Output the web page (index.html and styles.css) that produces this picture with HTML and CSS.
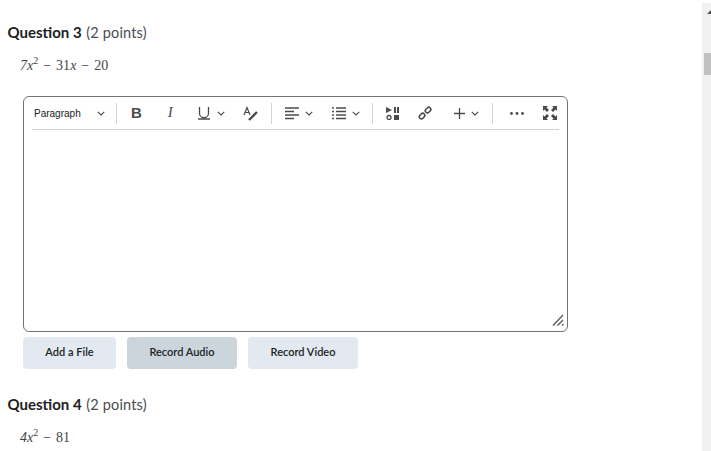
FILE: index.html
```html
<!DOCTYPE html>
<html lang="en">
<head>
<meta charset="utf-8">
<title>Quiz</title>
<link rel="stylesheet" href="styles.css">
</head>
<body>
<div class="page">
  <main class="content">
    <section class="question">
      <h2 class="q-title">Question 3 <span class="q-points">(2 points)</span></h2>
      <p class="math"><i>7x</i><sup>2</sup> − 31<i>x</i> − 20</p>
      <div class="editor">
        <div class="toolbar">
          <div class="para">Paragraph
            <svg class="chev" viewBox="0 0 8 5"><path d="M.7.8 4 4 7.3.8"/></svg>
          </div>
          <span class="sep"></span>
          <span class="tool t-b">B</span>
          <span class="tool t-i">I</span>
          <span class="tool t-u"><svg width="14" height="14" viewBox="0 0 14 14"><path class="st" d="M2.500 1v6.200a4.500 4.500 0 0 0 9 0V1M1 13h12"/></svg><svg class="chev" viewBox="0 0 8 5"><path d="M.7.8 4 4 7.3.8"/></svg></span>
          <span class="tool t-a"><svg width="16" height="15" viewBox="0 0 16 15"><path class="st thin" d="M1 9 4 1.500 7 9M2 6.500h4"/><path class="st thick" d="M6 14 14 6"/></svg></span>
          <span class="sep s2"></span>
          <span class="tool t-al"><svg width="14" height="13" viewBox="0 0 14 13"><path class="st" d="M0 1h14M0 4.500h9M0 8h14M0 11.500h9"/></svg><svg class="chev" viewBox="0 0 8 5"><path d="M.7.8 4 4 7.3.8"/></svg></span>
          <span class="tool t-li"><svg width="14" height="13" viewBox="0 0 14 13"><path class="st" d="M0 1h2M4 1h10M0 4.500h2M4 4.500h10M0 8h2M4 8h10M0 11.500h2M4 11.500h10"/></svg><svg class="chev" viewBox="0 0 8 5"><path d="M.7.8 4 4 7.3.8"/></svg></span>
          <span class="sep s3"></span>
          <span class="tool t-med"><svg width="13" height="13" viewBox="0 0 13 13"><path class="fl" d="M0 0 6 3 0 6zM8 0h2v6H8zM11 0h2v6h-2zM8 8h5v5H8z"/><circle class="st" cx="3" cy="10.500" r="2"/></svg></span>
          <span class="tool t-ln"><svg width="14" height="14" viewBox="0 0 14 14"><g class="st link"><rect x="1" y="8" width="6" height="4.200" rx="2.100" transform="rotate(-45 4 10)"/><rect x="7" y="2" width="6" height="4.200" rx="2.100" transform="rotate(-45 10 4)"/></g></svg></span>
          <span class="tool t-pl"><svg width="11" height="11" viewBox="0 0 11 11"><path class="st" d="M5.500 0v11M0 5.500h11"/></svg><svg class="chev" viewBox="0 0 8 5"><path d="M.7.8 4 4 7.3.8"/></svg></span>
          <span class="sep s4"></span>
          <span class="tool t-mo"><svg width="14" height="3" viewBox="0 0 14 3"><circle class="fl" cx="1.500" cy="1.500" r="1.400"/><circle class="fl" cx="7" cy="1.500" r="1.400"/><circle class="fl" cx="12.500" cy="1.500" r="1.400"/></svg></span>
          <span class="tool t-fs"><svg width="14" height="14" viewBox="0 0 14 14"><path class="fl" d="M0 0h5L3.500 1.500 6 4 4 6 1.500 3.500 0 5zM14 0v5L12.500 3.500 10 6 8 4 10.500 1.500 9 0zM0 14V9l1.500 1.500L4 8l2 2-2.500 2.500L5 14zM14 14H9l1.500-1.500L8 10l2-2 2.500 2.500L14 9z"/></svg></span>
        </div>
        <div class="edit-area">
          <svg class="grip" width="12" height="12" viewBox="0 0 12 12"><path d="M1 11.500 11 1M5.500 11.500 11 6M10 11.500l1.500-1.500"/></svg>
        </div>
      </div>
      <div class="actions">
        <button class="btn b1">Add a File</button>
        <button class="btn b2 active">Record Audio</button>
        <button class="btn b3">Record Video</button>
      </div>
    </section>
    <section class="question q4">
      <h2 class="q-title">Question 4 <span class="q-points">(2 points)</span></h2>
      <p class="math"><i>4x</i><sup>2</sup> − 81</p>
    </section>
  </main>
  <aside class="scrollbar">
    <div class="arrow"></div>
    <div class="thumb"></div>
  </aside>
</div>
</body>
</html>
```

FILE: styles.css
```css
* { box-sizing: border-box; }
html, body { margin: 0; height: 100%; overflow: hidden; background: #fff; }
body { font-family: Lato, "Liberation Sans", sans-serif; color: #202122; }
.page { display: flex; height: 451px; }
.content { flex: 1; min-width: 0; padding: 23px 0 0 7.500px; }
.q-title { margin: 0; font-size: 15px; line-height: 18px; font-weight: 700; color: #202122; }
.q-points { margin-left: 1px; font-size: 14.500px; font-weight: 400; letter-spacing: .15px; color: #494c4e; }
.math { margin: 15px 0 0 12.500px; font-family: "Liberation Serif", serif; font-size: 14px; line-height: 18px; color: #444; word-spacing: 1.500px; }
.math sup { font-size: 10px; line-height: 0; }
.editor { width: 545px; height: 236px; margin: 21px 0 0 15.500px; border: 1px solid #6e7477; border-radius: 6px; display: flex; flex-direction: column; }
.toolbar { display: flex; align-items: center; height: 33px; margin: 0 8px; border-bottom: 1px solid #cdd5dc; color: #494c4e; }
.para { display: flex; align-items: center; width: 84px; padding-left: 2px; font-family: "Liberation Sans", sans-serif; font-size: 10px; color: #202122; }
.para .chev { margin-left: 16px; }
.chev { width: 8px; height: 5px; margin-left: 6px; fill: none; stroke: #494c4e; stroke-width: 1.100; }
.sep { width: 1px; height: 21px; background: #cdd5dc; flex: none; }
.tool { display: flex; align-items: center; flex: none; }
.st { fill: none; stroke: #494c4e; stroke-width: 1.300; }
.thin { stroke-width: 1.200; }
.link { stroke-width: 1.600; }
.thick { stroke-width: 2.400; }
.fl { fill: #494c4e; }
.t-b { margin-left: 14px; padding-bottom: 2px; font: 700 15px "Liberation Sans", sans-serif; }
.t-i { margin-left: 26px; padding-bottom: 2px; font: italic 400 15px "Liberation Serif", serif; }
.t-u { margin-left: 24px; }
.t-a { margin-left: 18px; }
.s2 { margin-left: 12px; }
.t-al { margin-left: 13px; }
.t-li { margin-left: 19px; }
.s3 { margin-left: 12px; }
.t-med { margin-left: 13px; }
.t-ln { margin-left: 19px; }
.t-pl { margin-left: 22px; }
.s4 { margin-left: 13px; }
.t-mo { margin-left: 17px; }
.t-fs { margin-left: 19px; }
.edit-area { flex: 1; position: relative; }
.grip { position: absolute; right: 3px; bottom: 5px; fill: none; stroke: #5f6467; stroke-width: 1.500; }
.actions { display: flex; gap: 11px; margin: 5px 0 0 15.500px; }
.btn { height: 32px; border: 0; border-radius: 4px; padding: 0 0 4px; background: #e3e9f1; font: 600 11px Lato, "Liberation Sans", sans-serif; color: #202122; }
.b1 { width: 93px; }
.b2 { width: 110px; }
.b3 { width: 110px; }
.active { background: #cdd5dc; }
.q4 { margin-top: 26px; }
.q4 .math { margin-top: 15px; }
.scrollbar { flex: none; width: 9px; margin-top: 3px; padding-left: 2px; background: #f1f1f1; position: relative; }
.arrow { position: absolute; top: 7px; right: 0; width: 0; height: 0; border-style: solid; border-width: 0 0 4px 4px; border-color: transparent transparent #505050 transparent; }
.thumb { width: 7px; height: 22px; margin-top: 50px; background: #c1c1c1; }
```
